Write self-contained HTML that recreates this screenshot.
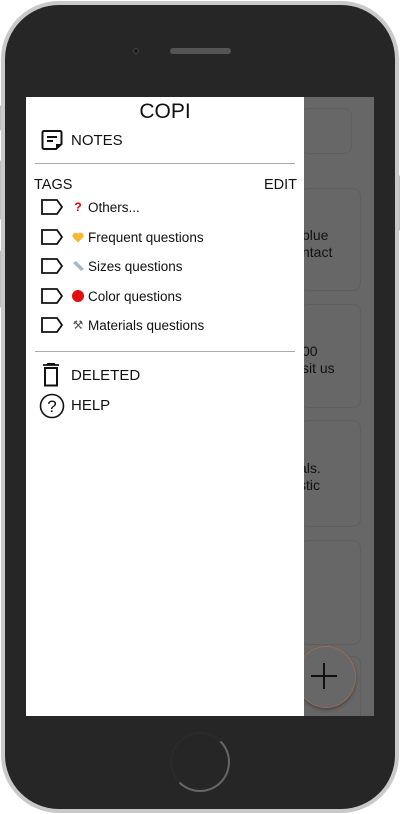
<!DOCTYPE html>
<html><head><meta charset="utf-8"><style>
*{margin:0;padding:0;box-sizing:border-box}
body{width:400px;height:814px;background:#fff;position:relative;overflow:hidden;font-family:"Liberation Sans","DejaVu Sans",sans-serif;color:#111}
.outer{position:absolute;left:1px;top:1px;width:398px;height:812px;border-radius:58px;background:#c9c9c9}
.inner{position:absolute;left:5px;top:5px;width:390px;height:804px;border-radius:54px;background:#262626}
.btn{position:absolute;background:#bdbdbd;width:4px;border-radius:2px}
.screen{position:absolute;left:26px;top:97px;width:348px;height:619px;background:#676767;overflow:hidden}
.card{position:absolute;border:1px solid #5e5e5e;border-radius:8px;background:#676767}
.ct{position:absolute;font-size:14px;color:#111;line-height:17px}
.drawer{position:absolute;left:0;top:0;width:278px;height:619px;background:#fff}
.it{position:absolute;font-size:15px}
.tag{position:absolute;left:15px;font-size:13.5px;display:flex;align-items:center}
.tag svg.t{margin-right:9px}
.em{display:inline-block;width:12px;text-align:center;margin-right:4px}
hr{position:absolute;border:0;border-top:1.5px solid #aaa;left:9px;width:260px}
</style></head><body>
<div class="btn" style="left:0;top:105px;height:26px"></div>
<div class="btn" style="left:0;top:160px;height:60px"></div>
<div class="btn" style="left:0;top:250px;height:58px"></div>
<div class="btn" style="left:396px;top:175px;height:56px"></div>
<div class="outer"></div>
<div class="inner"></div>
<div style="position:absolute;left:133px;top:48px;width:6px;height:6px;border-radius:50%;background:#1a1a1a;border:1px solid #444"></div>
<div style="position:absolute;left:170px;top:48px;width:61px;height:6px;border-radius:3px;background:#555"></div>
<div style="position:absolute;left:170px;top:732px;width:60px;height:60px;border-radius:50%;border:2px solid #666;border-top-color:#2a2a2a;border-left-color:#2a2a2a"></div>
<div class="screen">
 <div class="card" style="left:274px;top:11px;width:52px;height:46px"></div>
 <div class="card" style="left:274px;top:91px;width:61px;height:103px"></div>
 <div class="ct" style="left:276px;top:130px">blue<br>ntact</div>
 <div class="card" style="left:274px;top:207px;width:61px;height:104px"></div>
 <div class="ct" style="left:276px;top:246px">00<br>sit us</div>
 <div class="card" style="left:274px;top:323px;width:61px;height:107px"></div>
 <div class="ct" style="left:273px;top:363px">als.<br>stic<br>.</div>
 <div class="card" style="left:274px;top:443px;width:61px;height:105px"></div>
 <div class="card" style="left:274px;top:559px;width:61px;height:80px"></div>
 <div style="position:absolute;left:270px;top:549px;width:60px;height:62px;border-radius:50%;border:1.5px solid #9a6a55;background:#676767;box-shadow:0 2px 3px rgba(0,0,0,.3)"></div>
 <div style="position:absolute;left:285px;top:578px;width:26px;height:2px;background:#111"></div>
 <div style="position:absolute;left:297px;top:566px;width:2px;height:26px;background:#111"></div>
 <div class="drawer">
  <div class="it" style="left:0;width:278px;text-align:center;top:3px;font-size:21px">COPI</div>
  <svg style="position:absolute;left:15px;top:32px" width="22" height="22" viewBox="0 0 22 22"><path d="M15 20H3a1.5 1.5 0 0 1-1.5-1.5v-15A1.5 1.5 0 0 1 3 2h16a1.5 1.5 0 0 1 1.5 1.5V15z" fill="none" stroke="#111" stroke-width="2"/><path d="M15 20v-5h5.5z" fill="#111"/><path d="M6 8h10M6 12h6" stroke="#111" stroke-width="2"/></svg>
  <div class="it" style="left:45px;top:35px">NOTES</div>
  <hr style="top:66px">
  <div class="it" style="left:8px;top:80px;font-size:14.5px">TAGS</div>
  <div class="it" style="left:238px;top:80px;font-size:14.5px">EDIT</div>
  <div class="tag" style="top:102px"><svg class="t" width="22" height="16"><path d="M1 1h15l5 7-5 7H1z" fill="none" stroke="#111" stroke-width="1.8"/></svg><span class="em" style="color:#d00;font-weight:bold;font-size:12px">?</span>Others...</div>
  <div class="tag" style="top:132px"><svg class="t" width="22" height="16"><path d="M1 1h15l5 7-5 7H1z" fill="none" stroke="#111" stroke-width="1.8"/></svg><svg class="em" width="12" height="11" viewBox="0 0 12 11"><path d="M6 10.5L1 5.5A2.8 2.8 0 0 1 6 2a2.8 2.8 0 0 1 5 3.5z" fill="#f5b82e"/></svg>Frequent questions</div>
  <div class="tag" style="top:161px"><svg class="t" width="22" height="16"><path d="M1 1h15l5 7-5 7H1z" fill="none" stroke="#111" stroke-width="1.8"/></svg><svg class="em" width="12" height="12"><path d="M1 3l3-2 8 8-3 2z" fill="#a9b8c8"/></svg>Sizes questions</div>
  <div class="tag" style="top:191px"><svg class="t" width="22" height="16"><path d="M1 1h15l5 7-5 7H1z" fill="none" stroke="#111" stroke-width="1.8"/></svg><span class="em" style="height:12px;border-radius:50%;background:#e01010"></span>Color questions</div>
  <div class="tag" style="top:220px"><svg class="t" width="22" height="16"><path d="M1 1h15l5 7-5 7H1z" fill="none" stroke="#111" stroke-width="1.8"/></svg><span class="em" style="color:#555;font-size:12px">⚒</span>Materials questions</div>
  <hr style="top:254px">
  <svg style="position:absolute;left:16px;top:266px" width="18" height="24"><path d="M1 2h16M6 2V0.5h6V2" stroke="#111" stroke-width="1.8" fill="none"/><rect x="3" y="5" width="12" height="17.5" fill="none" stroke="#111" stroke-width="2"/></svg>
  <div class="it" style="left:45px;top:270px">DELETED</div>
  <svg style="position:absolute;left:13px;top:296px" width="26" height="26"><circle cx="13" cy="13" r="11.5" fill="none" stroke="#111" stroke-width="1.6"/><text x="13" y="19" text-anchor="middle" font-size="17" font-family="Liberation Sans" fill="#111">?</text></svg>
  <div class="it" style="left:45px;top:300px">HELP</div>
 </div>
</div>
</body></html>
